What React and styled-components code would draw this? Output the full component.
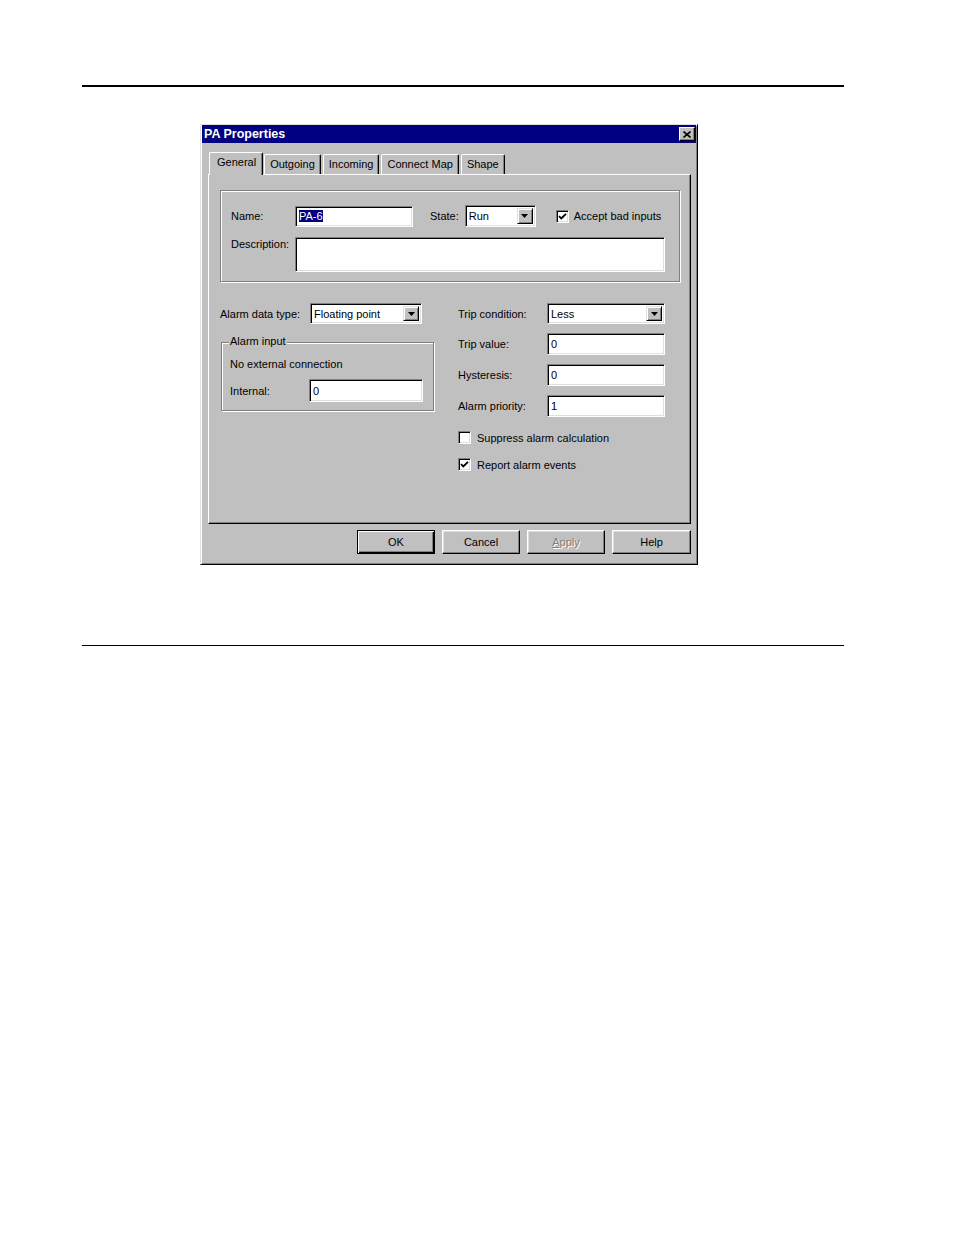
import styled, { createGlobalStyle } from "styled-components";

const GlobalStyle = createGlobalStyle`
  body {
    margin: 0;
    background: #fff;
    color: #000;
    font-family: "Liberation Sans", Arial, sans-serif;
    font-size: 11px;
  }
`;

const Page = styled.div`
  width: 762px;
  padding: 85px 0 0 82px;
`;

const Rule = styled.div`
  height: ${(p) => p.$weight}px;
  margin-top: ${(p) => p.$gap || 0}px;
  background: #000;
`;

const Dialog = styled.div`
  box-sizing: border-box;
  width: 498px;
  height: 441px;
  margin: 37px 0 0 118px;
  padding: 0 1px 1px 1px;
  display: flex;
  flex-direction: column;
  background: #c0c0c0;
  border: 1px solid;
  border-color: #dfdfdf #000 #000 #dfdfdf;
  box-shadow: inset 1px 1px #fff, inset -1px -1px #808080;
`;

const TitleBar = styled.div`
  height: 18px;
  display: flex;
  align-items: center;
  justify-content: space-between;
  padding: 0 1px 0 2px;
  background: #000080;
`;

const Title = styled.span`
  color: #fff;
  font-weight: 700;
  font-size: 12.5px;
`;

const CloseButton = styled.div`
  box-sizing: border-box;
  width: 16px;
  height: 14px;
  display: flex;
  align-items: center;
  justify-content: center;
  background: #c0c0c0;
  border: 1px solid;
  border-color: #fff #000 #000 #fff;
  box-shadow: inset -1px -1px #808080;
`;

const Body = styled.div`
  flex: 1;
  padding: 9px 5px 0 6px;
`;

const TabStrip = styled.div`
  height: 22px;
  display: flex;
  align-items: flex-end;
  padding-left: 1px;
`;

const Tab = styled.div`
  position: relative;
  box-sizing: border-box;
  height: ${(p) => (p.$active ? 23 : 20)}px;
  margin-bottom: ${(p) => (p.$active ? -1 : 0)}px;
  margin-right: ${(p) => (p.$active ? 1 : 2)}px;
  padding: ${(p) => (p.$active ? "3px 6px 0 7px" : "3px 5px 0 5px")};
  z-index: ${(p) => (p.$active ? 1 : 0)};
  background: #c0c0c0;
  border-left: 1px solid #fff;
  border-top: 1px solid #fff;
  border-right: 1px solid #000;
  border-radius: 2px 2px 0 0;
  box-shadow: inset -1px 0 #808080;
  white-space: nowrap;
`;

const Panel = styled.div`
  box-sizing: border-box;
  height: 350px;
  padding: 15px 10px 0 11px;
  border-left: 1px solid #fff;
  border-top: 1px solid #fff;
  border-right: 1px solid #000;
  border-bottom: 1px solid #000;
  box-shadow: inset -1px -1px #808080;
`;

const GroupBox = styled.div`
  position: relative;
  box-sizing: border-box;
  height: ${(p) => p.$height}px;
  width: ${(p) => (p.$width ? `${p.$width}px` : "auto")};
  margin: ${(p) => p.$margin || 0};
  padding: ${(p) => p.$padding};
  border: 1px solid #808080;
  box-shadow: inset 1px 1px #fff, 1px 1px #fff;
`;

const Legend = styled.span`
  position: absolute;
  top: -8px;
  left: 7px;
  padding: 0 1px;
  background: #c0c0c0;
`;

const Row = styled.div`
  display: flex;
  align-items: ${(p) => (p.$top ? "flex-start" : "center")};
  margin-top: ${(p) => p.$gap || 0}px;
`;

const Label = styled.span`
  flex: none;
  width: ${(p) => (p.$width ? `${p.$width}px` : "auto")};
  margin-left: ${(p) => p.$before || 0}px;
  padding-top: ${(p) => (p.$top ? 1 : 0)}px;
  white-space: nowrap;
`;

const Sunken = styled.div`
  box-sizing: border-box;
  flex: none;
  width: ${(p) => p.$width}px;
  height: ${(p) => p.$height}px;
  margin-left: ${(p) => p.$before || 0}px;
  display: flex;
  align-items: ${(p) => (p.$multi ? "flex-start" : "center")};
  padding-left: 3px;
  background: #fff;
  border: 1px solid;
  border-color: #808080 #fff #fff #808080;
  box-shadow: inset 1px 1px #000, inset -1px -1px #dfdfdf;
  white-space: nowrap;
`;

const ComboValue = styled.span`
  flex: 1;
`;

const Selected = styled.span`
  background: #000080;
  color: #fff;
`;

const ArrowButton = styled.div`
  box-sizing: border-box;
  width: 16px;
  height: calc(100% - 4px);
  margin-right: 2px;
  display: flex;
  align-items: center;
  justify-content: center;
  background: #c0c0c0;
  border: 1px solid;
  border-color: #dfdfdf #000 #000 #dfdfdf;
  box-shadow: inset 1px 1px #fff, inset -1px -1px #808080;
`;

const Lower = styled.div`
  display: flex;
  margin-top: 21px;
`;

const LeftColumn = styled.div`
  width: 214px;
`;

const RightColumn = styled.div`
  margin-left: 24px;
  display: flex;
  flex-direction: column;
  gap: 9px;
`;

const Check = styled.label`
  display: flex;
  align-items: center;
  gap: ${(p) => p.$gap}px;
  margin-left: ${(p) => p.$before || 0}px;
  margin-top: ${(p) => p.$above || 0}px;
  white-space: nowrap;
`;

const CheckBox = styled.span`
  box-sizing: border-box;
  width: 13px;
  height: 13px;
  display: flex;
  align-items: center;
  justify-content: center;
  background: #fff;
  border: 1px solid;
  border-color: #808080 #fff #fff #808080;
  box-shadow: inset 1px 1px #000, inset -1px -1px #dfdfdf;
`;

const Note = styled.div`
  line-height: 13px;
`;

const Buttons = styled.div`
  display: flex;
  justify-content: flex-end;
  gap: 7px;
  margin-top: 6px;
`;

const Button = styled.div`
  box-sizing: border-box;
  width: ${(p) => (p.$wide ? 79 : 78)}px;
  height: 24px;
  display: flex;
  align-items: center;
  justify-content: center;
  background: #c0c0c0;
  border: 1px solid;
  border-color: ${(p) => (p.$default ? "#000" : "#fff #000 #000 #fff")};
  box-shadow: ${(p) =>
    p.$default
      ? "inset 1px 1px #fff, inset -1px -1px #000, inset -2px -2px #808080"
      : "inset -1px -1px #808080, inset 1px 1px #dfdfdf"};
  color: ${(p) => (p.$disabled ? "#808080" : "#000")};
  text-shadow: ${(p) => (p.$disabled ? "1px 1px #fff" : "none")};
`;

const Arrow = () => (
  <svg width="7" height="4" viewBox="0 0 7 4">
    <path d="M0 0h7L3.5 4z" fill="#000" />
  </svg>
);

const Tick = () => (
  <svg width="9" height="9" viewBox="0 0 9 9">
    <path d="M1 4.2l2.3 2.3L8 1.8" fill="none" stroke="#000" strokeWidth="1.8" />
  </svg>
);

const Combo = ({ value, width, height = 21, before }) => (
  <Sunken $width={width} $height={height} $before={before}>
    <ComboValue>{value}</ComboValue>
    <ArrowButton>
      <Arrow />
    </ArrowButton>
  </Sunken>
);

const CheckOption = ({ checked, label, gap, before, above }) => (
  <Check $gap={gap} $before={before} $above={above}>
    <CheckBox>{checked && <Tick />}</CheckBox>
    {label}
  </Check>
);

const tabs = ["General", "Outgoing", "Incoming", "Connect Map", "Shape"];

const tripFields = [
  { label: "Trip value:", value: "0" },
  { label: "Hysteresis:", value: "0" },
  { label: "Alarm priority:", value: "1" },
];

export default function App() {
  return (
    <>
      <GlobalStyle />
      <Page>
        <Rule $weight={2} />
        <Dialog>
          <TitleBar>
            <Title>PA Properties</Title>
            <CloseButton>
              <svg width="8" height="7" viewBox="0 0 8 7">
                <path d="M0.5 0.5l7 6M7.5 0.5l-7 6" stroke="#000" strokeWidth="1.6" />
              </svg>
            </CloseButton>
          </TitleBar>
          <Body>
            <TabStrip>
              {tabs.map((t, i) => (
                <Tab key={t} $active={i === 0}>
                  {t}
                </Tab>
              ))}
            </TabStrip>
            <Panel>
              <GroupBox $height={92} $padding="14px 0 0 10px">
                <Row>
                  <Label $width={64}>Name:</Label>
                  <Sunken $width={118} $height={21}>
                    <Selected>PA-6</Selected>
                  </Sunken>
                  <Label $before={17}>State:</Label>
                  <Combo value="Run" width={71} height={22} before={6} />
                  <CheckOption checked label="Accept bad inputs" gap={5} before={20} />
                </Row>
                <Row $top $gap={10}>
                  <Label $width={64} $top>
                    Description:
                  </Label>
                  <Sunken $width={370} $height={35} $multi />
                </Row>
              </GroupBox>
              <Lower>
                <LeftColumn>
                  <Row>
                    <Label $width={90}>Alarm data type:</Label>
                    <Combo value="Floating point" width={112} />
                  </Row>
                  <GroupBox
                    $height={69}
                    $width={213}
                    $margin="18px 0 0 1px"
                    $padding="15px 0 0 8px"
                  >
                    <Legend>Alarm input</Legend>
                    <Note>No external connection</Note>
                    <Row $gap={8}>
                      <Label $width={79}>Internal:</Label>
                      <Sunken $width={114} $height={23}>
                        0
                      </Sunken>
                    </Row>
                  </GroupBox>
                </LeftColumn>
                <RightColumn>
                  <Row>
                    <Label $width={89}>Trip condition:</Label>
                    <Combo value="Less" width={118} />
                  </Row>
                  {tripFields.map((f) => (
                    <Row key={f.label}>
                      <Label $width={89}>{f.label}</Label>
                      <Sunken $width={118} $height={22}>
                        {f.value}
                      </Sunken>
                    </Row>
                  ))}
                  <CheckOption label="Suppress alarm calculation" gap={6} above={5} />
                  <CheckOption checked label="Report alarm events" gap={6} above={5} />
                </RightColumn>
              </Lower>
            </Panel>
            <Buttons>
              <Button $default>OK</Button>
              <Button>Cancel</Button>
              <Button $disabled>
                <span>
                  <u>A</u>pply
                </span>
              </Button>
              <Button $wide>Help</Button>
            </Buttons>
          </Body>
        </Dialog>
        <Rule $weight={1} $gap={80} />
      </Page>
    </>
  );
}
